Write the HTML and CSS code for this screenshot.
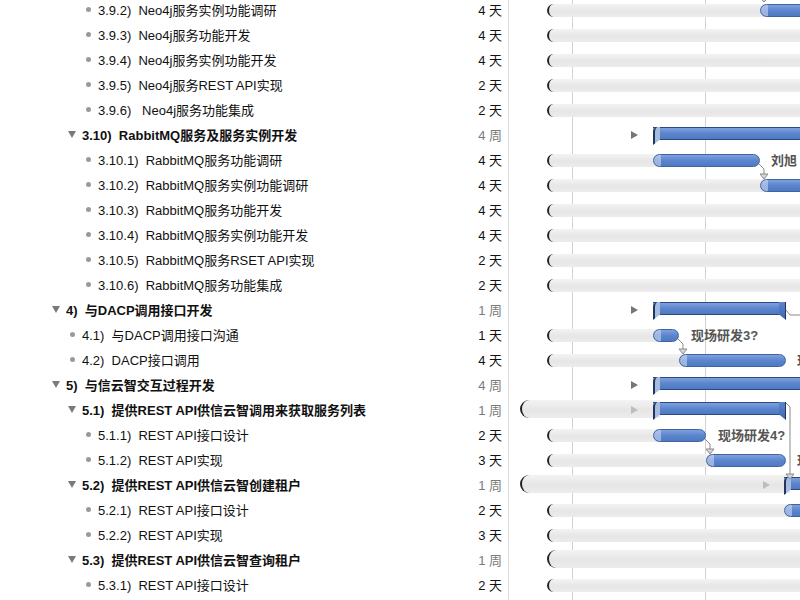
FILE: index.html
```html
<!DOCTYPE html>
<html lang="zh-CN">
<head>
    <meta charset="UTF-8">
    <meta name="viewport" content="width=device-width, initial-scale=1.0">
    <title>项目计划</title>
    <link rel="stylesheet" href="styles.css">
</head>
<body>
    <div class="gantt">
        <div class="outline">
            <div class="row l3"><span class="marker bullet"></span><span class="name">3.9.2)&nbsp; Neo4j服务实例功能调研</span><span class="dur">4 天</span></div>
            <div class="row l3"><span class="marker bullet"></span><span class="name">3.9.3)&nbsp; Neo4j服务功能开发</span><span class="dur">4 天</span></div>
            <div class="row l3"><span class="marker bullet"></span><span class="name">3.9.4)&nbsp; Neo4j服务实例功能开发</span><span class="dur">4 天</span></div>
            <div class="row l3"><span class="marker bullet"></span><span class="name">3.9.5)&nbsp; Neo4j服务REST API实现</span><span class="dur">2 天</span></div>
            <div class="row l3"><span class="marker bullet"></span><span class="name">3.9.6)&nbsp;&nbsp; Neo4j服务功能集成</span><span class="dur">2 天</span></div>
            <div class="row l2 group"><span class="marker toggle"></span><span class="name">3.10)&nbsp; RabbitMQ服务及服务实例开发</span><span class="dur">4 周</span></div>
            <div class="row l3"><span class="marker bullet"></span><span class="name">3.10.1)&nbsp; RabbitMQ服务功能调研</span><span class="dur">4 天</span></div>
            <div class="row l3"><span class="marker bullet"></span><span class="name">3.10.2)&nbsp; RabbitMQ服务实例功能调研</span><span class="dur">4 天</span></div>
            <div class="row l3"><span class="marker bullet"></span><span class="name">3.10.3)&nbsp; RabbitMQ服务功能开发</span><span class="dur">4 天</span></div>
            <div class="row l3"><span class="marker bullet"></span><span class="name">3.10.4)&nbsp; RabbitMQ服务实例功能开发</span><span class="dur">4 天</span></div>
            <div class="row l3"><span class="marker bullet"></span><span class="name">3.10.5)&nbsp; RabbitMQ服务RSET API实现</span><span class="dur">2 天</span></div>
            <div class="row l3"><span class="marker bullet"></span><span class="name">3.10.6)&nbsp; RabbitMQ服务功能集成</span><span class="dur">2 天</span></div>
            <div class="row l1 group"><span class="marker toggle"></span><span class="name">4)&nbsp; 与DACP调用接口开发</span><span class="dur">1 周</span></div>
            <div class="row l2"><span class="marker bullet"></span><span class="name">4.1)&nbsp; 与DACP调用接口沟通</span><span class="dur">1 天</span></div>
            <div class="row l2"><span class="marker bullet"></span><span class="name">4.2)&nbsp; DACP接口调用</span><span class="dur">4 天</span></div>
            <div class="row l1 group"><span class="marker toggle"></span><span class="name">5)&nbsp; 与信云智交互过程开发</span><span class="dur">4 周</span></div>
            <div class="row l2 group"><span class="marker toggle"></span><span class="name">5.1)&nbsp; 提供REST API供信云智调用来获取服务列表</span><span class="dur">1 周</span></div>
            <div class="row l3"><span class="marker bullet"></span><span class="name">5.1.1)&nbsp; REST API接口设计</span><span class="dur">2 天</span></div>
            <div class="row l3"><span class="marker bullet"></span><span class="name">5.1.2)&nbsp; REST API实现</span><span class="dur">3 天</span></div>
            <div class="row l2 group"><span class="marker toggle"></span><span class="name">5.2)&nbsp; 提供REST API供信云智创建租户</span><span class="dur">1 周</span></div>
            <div class="row l3"><span class="marker bullet"></span><span class="name">5.2.1)&nbsp; REST API接口设计</span><span class="dur">2 天</span></div>
            <div class="row l3"><span class="marker bullet"></span><span class="name">5.2.2)&nbsp; REST API实现</span><span class="dur">3 天</span></div>
            <div class="row l2 group"><span class="marker toggle"></span><span class="name">5.3)&nbsp; 提供REST API供信云智查询租户</span><span class="dur">1 周</span></div>
            <div class="row l3"><span class="marker bullet"></span><span class="name">5.3.1)&nbsp; REST API接口设计</span><span class="dur">2 天</span></div>
        </div>

        <div class="chart">
            <!-- 3.9.x -->
            <div class="lane"><div class="track" style="left:38px;width:220px"></div><div class="bar" style="left:251px;width:80px"></div></div>
            <div class="lane"><div class="track" style="left:38px;width:300px"></div></div>
            <div class="lane"><div class="track" style="left:38px;width:300px"></div></div>
            <div class="lane"><div class="track" style="left:38px;width:300px"></div></div>
            <div class="lane"><div class="track" style="left:38px;width:300px"></div></div>
            <!-- 3.10 -->
            <div class="lane"><div class="caret"></div><div class="sum" style="left:144px;width:200px"></div></div>
            <div class="lane"><div class="track" style="left:38px;width:114px"></div><div class="bar" style="left:144px;width:107px"></div><span class="lbl" style="left:262px">刘旭</span></div>
            <div class="lane"><div class="track" style="left:38px;width:220px"></div><div class="bar" style="left:251px;width:80px"></div></div>
            <div class="lane"><div class="track" style="left:38px;width:300px"></div></div>
            <div class="lane"><div class="track" style="left:38px;width:300px"></div></div>
            <div class="lane"><div class="track" style="left:38px;width:300px"></div></div>
            <div class="lane"><div class="track" style="left:38px;width:300px"></div></div>
            <!-- 4 -->
            <div class="lane"><div class="caret"></div><div class="sum end" style="left:144px;width:133px"></div></div>
            <div class="lane"><div class="track" style="left:38px;width:114px"></div><div class="bar" style="left:144px;width:26px"></div><span class="lbl" style="left:182px">现场研发3?</span></div>
            <div class="lane"><div class="track" style="left:38px;width:140px"></div><div class="bar" style="left:170px;width:107px"></div><span class="lbl" style="left:288px">现场研发3?</span></div>
            <!-- 5 -->
            <div class="lane"><div class="caret"></div><div class="sum" style="left:144px;width:200px"></div></div>
            <div class="lane"><div class="track tall" style="left:11px;width:140px"></div><div class="caret light"></div><div class="sum end" style="left:144px;width:133px"></div></div>
            <div class="lane"><div class="track" style="left:38px;width:114px"></div><div class="bar" style="left:144px;width:53px"></div><span class="lbl" style="left:209px">现场研发4?</span></div>
            <div class="lane"><div class="track" style="left:38px;width:166px"></div><div class="bar" style="left:197px;width:80px"></div><span class="lbl" style="left:288px">现场研发4?</span></div>
            <div class="lane"><div class="track tall" style="left:11px;width:270px"></div><div class="caret light" style="left:254px"></div><div class="sum" style="left:275px;width:60px"></div></div>
            <div class="lane"><div class="track" style="left:38px;width:244px"></div><div class="bar" style="left:275px;width:60px"></div></div>
            <div class="lane"><div class="track" style="left:38px;width:300px"></div></div>
            <div class="lane"><div class="track tall" style="left:38px;width:300px"></div></div>
            <div class="lane"><div class="track" style="left:38px;width:300px"></div></div>

            <svg class="links" width="291" height="602" viewBox="0 0 291 602">
                <g fill="none" stroke="#8a8a8a" stroke-width="1">
                    <path d="M250 166 L255 171 L255 176"/>
                    <path d="M169 341 L174 346 L174 351"/>
                    <path d="M196 441 L201 446 L201 451"/>
                    <path d="M277 312 L281 317 L300 317"/>
                    <path d="M277 405 L281 409 L281 476"/>
                    <path d="M255 0 L255 2"/>
                </g>
                <g fill="#d8d8d8" stroke="#8a8a8a" stroke-width="1">
                    <polygon points="251,176 259,176 255,181"/>
                    <polygon points="170,351 178,351 174,356"/>
                    <polygon points="197,451 205,451 201,456"/>
                    <polygon points="277,476 285,476 281,481"/>
                    <polygon points="251,0 259,0 255,4"/>
                </g>
            </svg>
        </div>
    </div>
</body>
</html>
```

FILE: styles.css
```css
body {
    margin: 0;
    font-family: "Liberation Sans", "Noto Sans CJK SC", sans-serif;
    font-size: 13px;
    color: #111;
    background: #fff;
    overflow: hidden;
}
.gantt {
    display: flex;
    margin-top: -2px;
    height: 602px;
}
.outline {
    width: 508px;
    border-right: 1px solid #dedede;
    flex-shrink: 0;
}
.row {
    display: flex;
    align-items: center;
    height: 25px;
    box-sizing: border-box;
    padding-bottom: 2px;
    white-space: nowrap;
}
.l1 { padding-left: 50px; }
.l2 { padding-left: 66px; }
.l3 { padding-left: 82px; }
.marker {
    width: 12px;
    margin-right: 4px;
    display: flex;
    justify-content: center;
    align-items: center;
}
.bullet::before {
    content: "";
    width: 5px;
    height: 5px;
    border-radius: 50%;
    background: #9a9a9a;
}
.toggle::before {
    content: "";
    border-left: 4px solid transparent;
    border-right: 4px solid transparent;
    border-top: 7px solid #7a7a7a;
}
.name {
    flex: 1;
}
.group .name {
    font-weight: bold;
}
.dur {
    width: 60px;
    text-align: right;
    padding-right: 6px;
}
.group .dur {
    color: #7a7a7a;
}

.chart {
    flex: 1;
    position: relative;
    overflow: hidden;
    background-image:
        linear-gradient(to right, transparent 63px, #d2d2d2 63px, #d2d2d2 64px, transparent 64px),
        linear-gradient(to right, transparent 196px, #d2d2d2 196px, #d2d2d2 197px, transparent 197px);
}
.lane {
    position: relative;
    height: 25px;
}
.track {
    position: absolute;
    top: 6px;
    height: 13px;
    box-sizing: border-box;
    border-left: 2px solid #222;
    border-radius: 7px 0 0 7px;
    background: linear-gradient(#f3f3f3, #e6e6e6 55%, #ececec);
}
.track.tall {
    top: 2px;
    height: 18px;
    border-radius: 9px 0 0 9px;
}
.bar {
    position: absolute;
    top: 6px;
    height: 13px;
    box-sizing: border-box;
    border-radius: 7px;
    border: 1px solid #3f64a6;
    background:
        linear-gradient(to right, rgba(214, 224, 242, 0.55) 0, rgba(214, 224, 242, 0.55) 7px, transparent 7px),
        linear-gradient(#7fa1dd, #5b85cd 50%, #5079c3);
}
.sum {
    position: absolute;
    top: 4px;
    height: 13px;
    box-sizing: border-box;
    border-top: 1px solid #2c4a82;
    border-bottom: 1px solid #2c4a82;
    background: linear-gradient(#7fa1dd, #5b85cd 50%, #5079c3);
}
.sum::before {
    content: "";
    position: absolute;
    left: 0;
    top: -1px;
    width: 7px;
    height: 18px;
    box-sizing: border-box;
    border-left: 2px solid #22355c;
    border-radius: 5px 0 0 0;
    background: #a7bbe0;
    clip-path: polygon(0 0, 100% 0, 100% 70%, 0 100%);
}
.sum.end::after {
    content: "";
    position: absolute;
    right: 0;
    top: -1px;
    width: 7px;
    height: 18px;
    box-sizing: border-box;
    border-right: 1px solid #22355c;
    background: linear-gradient(#5b85cd, #3f66ab);
    clip-path: polygon(0 0, 100% 0, 100% 100%, 0 70%);
}
.caret {
    position: absolute;
    left: 122px;
    top: 8px;
    border-left: 7px solid #777;
    border-top: 4.5px solid transparent;
    border-bottom: 4.5px solid transparent;
}
.caret.light {
    border-left-color: #bdbdbd;
}
.lbl {
    position: absolute;
    top: 0;
    line-height: 25px;
    font-weight: bold;
    color: #555;
    white-space: nowrap;
}
.links {
    position: absolute;
    left: 0;
    top: 0;
}
```
